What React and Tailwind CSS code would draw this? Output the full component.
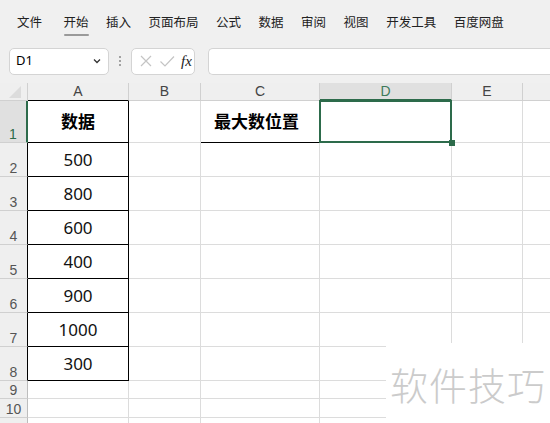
import React from 'react';

const cols = [
  { key: 'A', w: 101 },
  { key: 'B', w: 72 },
  { key: 'C', w: 119 },
  { key: 'D', w: 132 },
  { key: 'E', w: 71 },
  { key: 'F', w: 60 },
];

const rowHeights = [42, 34, 34, 34, 34, 34, 34, 34, 18, 19, 20];
const data = ['数据', '500', '800', '600', '400', '900', '1000', '300'];

const menu = ['文件', '开始', '插入', '页面布局', '公式', '数据', '审阅', '视图', '开发工具', '百度网盘'];

function Cell({ r, c, h }) {
  // r: row index 0-based, c: column key
  if (c === 'A' && r < 8) {
    return (
      <div className="border-r border-b border-black flex items-center justify-center" style={{ height: h }}>
        <span className={r === 0 ? 'text-[17px] font-bold text-black' : 'text-[17px] text-[#111]'}>
          {data[r]}
        </span>
      </div>
    );
  }
  if (c === 'C' && r === 0) {
    return (
      <div className="border-b border-black border-r border-r-[#dcdcdc] flex items-center pl-[13px]" style={{ height: h }}>
        <span className="text-[17px] font-bold text-black">最大数位置</span>
      </div>
    );
  }
  if (c === 'D' && r === 0) {
    return (
      <div className="relative border-r border-b border-[#dcdcdc]" style={{ height: h }}>
        <div className="absolute -left-px -top-px -right-px -bottom-px border-2 border-[#2d6b4b]" />
        <div className="absolute -right-[4px] -bottom-[4px] w-[6px] h-[6px] bg-[#2d6b4b]" />
      </div>
    );
  }
  return <div className="border-r border-b border-[#dcdcdc]" style={{ height: h }} />;
}

export default function App() {
  return (
    <div
      className="relative w-[550px] h-[423px] overflow-hidden bg-[#f0f0f0] text-[#222]"
      style={{ fontFamily: '"Noto Sans", "Noto Sans CJK SC", sans-serif' }}
    >
      {/* 菜单栏 */}
      <div className="h-[46px] flex items-center pl-[17px] gap-[17.5px] text-[12.5px]">
        {menu.map((m) => (
          <div key={m} className={m === '开始' ? 'relative ml-[4px]' : 'relative'}>
            <span>{m}</span>
            {m === '开始' && (
              <div className="absolute left-0 right-0 -bottom-[4px] h-[2px] bg-[#9a9a9a] rounded" />
            )}
          </div>
        ))}
      </div>

      {/* 编辑栏 */}
      <div className="flex items-center h-[28px] mt-[1px]">
        <div className="ml-[9px] w-[100px] h-[27px] bg-white border border-[#d4d4d4] rounded-[5px] flex items-center justify-between pl-[6px] pr-[6px]">
          <span className="text-[13px] text-black">D1</span>
          <svg width="10" height="10" viewBox="0 0 10 10">
            <path d="M2 3.5 L5 6.5 L8 3.5" fill="none" stroke="#333" strokeWidth="1.3" />
          </svg>
        </div>
        <div className="w-[22px] flex justify-center">
          <svg width="4" height="14" viewBox="0 0 4 14">
            <circle cx="2" cy="3" r="1" fill="#888" />
            <circle cx="2" cy="7" r="1" fill="#888" />
            <circle cx="2" cy="11" r="1" fill="#888" />
          </svg>
        </div>
        <div className="w-[64px] h-[27px] bg-white border border-[#d4d4d4] rounded-[5px] flex items-center pl-[7px] gap-[6px]">
          <svg width="14" height="14" viewBox="0 0 14 14">
            <path d="M2 2 L12 12 M12 2 L2 12" stroke="#c4c4c4" strokeWidth="1.2" />
          </svg>
          <svg width="16" height="14" viewBox="0 0 16 14">
            <path d="M1.5 7.5 L6 12 L15 2.5" fill="none" stroke="#c4c4c4" strokeWidth="1.2" />
          </svg>
          <span className="text-[15px] italic text-[#222]" style={{ fontFamily: '"Liberation Serif", serif' }}>
            fx
          </span>
        </div>
        <div className="ml-[13px] flex-1 h-[27px] bg-white border border-[#d4d4d4] rounded-l-[5px] border-r-0" />
      </div>

      {/* 表格 */}
      <div className="mt-[8px] bg-white">
        <div
          className="grid"
          style={{ gridTemplateColumns: `28px ${cols.map((c) => c.w + 'px').join(' ')}` }}
        >
          {/* 列标题 */}
          <div className="h-[18px] bg-[#efefef] border-r border-b border-[#d0d0d0] relative overflow-hidden">
            <svg className="absolute left-[9px] bottom-[2px]" width="12" height="12" viewBox="0 0 12 12">
              <path d="M12 0 L12 12 L0 12 Z" fill="#dcdcdc" />
            </svg>
          </div>
          {cols.map((c) => (
            <div
              key={c.key}
              className={
                c.key === 'D'
                  ? 'h-[18px] bg-[#e0e0e0] border-r border-[#d0d0d0] border-b-2 border-b-[#2d6b4b] flex items-center justify-center text-[14px] text-[#3d7a5a]'
                  : c.key === 'A'
                  ? 'h-[18px] bg-[#efefef] border-r border-[#d0d0d0] border-b border-b-black flex items-center justify-center text-[14px] text-[#444]'
                  : 'h-[18px] bg-[#efefef] border-r border-b border-[#d0d0d0] flex items-center justify-center text-[14px] text-[#444]'
              }
              style={{ fontFamily: '"Liberation Sans", sans-serif' }}
            >
              {c.key === 'F' ? '' : c.key}
            </div>
          ))}

          {/* 行 */}
          {rowHeights.map((h, r) => (
            <React.Fragment key={r}>
              <div
                className={
                  r === 0
                    ? 'bg-[#e0e0e0] border-r-2 border-r-[#2d6b4b] border-b border-b-[#d0d0d0] flex items-end justify-center pb-[1px] text-[14px] text-[#2d6b4b] leading-none'
                    : r < 8
                    ? 'bg-[#efefef] border-r border-r-black border-b border-b-[#d0d0d0] flex items-end justify-center pb-[1px] text-[14px] text-[#555] leading-none'
                    : 'bg-[#efefef] border-r border-r-[#bdbdbd] border-b border-b-[#d0d0d0] flex items-end justify-center pb-[1px] text-[14px] text-[#555] leading-none'
                }
                style={{ height: h, fontFamily: '"Liberation Sans", sans-serif' }}
              >
                {r + 1 <= 10 ? r + 1 : ''}
              </div>
              {cols.map((c) => (
                <Cell key={c.key} r={r} c={c.key} h={h} />
              ))}
            </React.Fragment>
          ))}
        </div>
      </div>

      {/* 水印 */}
      <div className="absolute left-[386px] top-[343px] w-[164px] h-[80px] bg-white flex items-center pl-[4px]">
        <span
          className="text-[38px] tracking-[1px] text-[#cbcbcb]"
          style={{ fontFamily: '"Noto Sans CJK SC", sans-serif', fontWeight: 300 }}
        >
          软件技巧
        </span>
      </div>
    </div>
  );
}
